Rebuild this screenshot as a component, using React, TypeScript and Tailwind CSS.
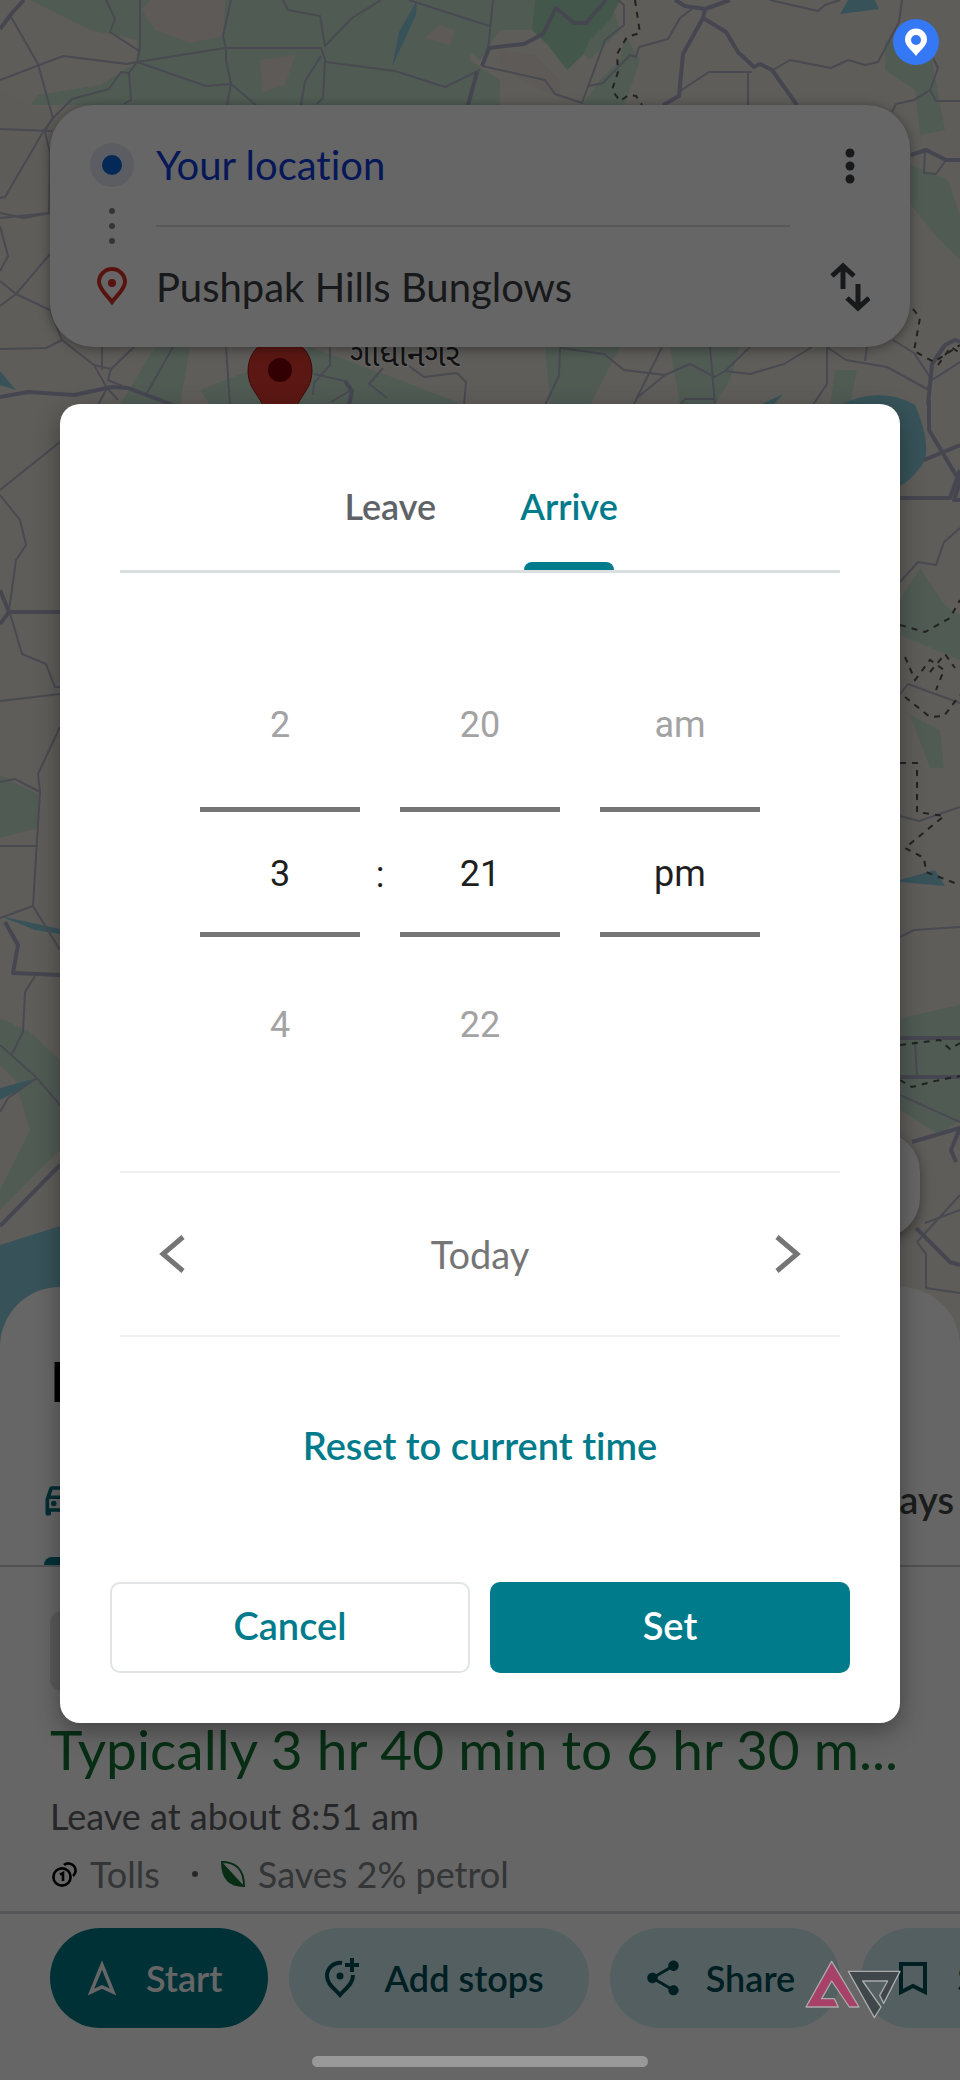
import { useState } from 'react';
import { MdOutlineDirectionsCar, MdShare } from 'react-icons/md';

const thinRoads = [
  'M11 17L38 64L52 115L53 118L45 131M0 80L63 56L127 64L137 62L140 48L140 0',
  'M137 62L225 48H321L326 62L395 71L445 87L480 70',
  'M106 0L115 19L110 32L139 51M137 62L129 73L131 100L124 104M129 73L121 72L109 89L72 99L53 118L43 132L5 197L0 198',
  'M231 0L223 36L226 48V60L231 84L206 86L137 62M231 84L227 105M231 84L256 105',
  'M283 0L288 10L320 16L325 46L352 18L381 0M409 0L480 23M321 56L305 81L301 105M325 60L323 98L317 104',
  'M45 132L50 153L49 213L0 218M0 129L52 131M0 213L24 218L50 213M0 226L8 256L0 271M50 254L16 294L0 306M0 281L16 294L50 310L62 340L46 348L0 349',
  'M62 340L94 365L111 369L134 347M102 347V370M94 365L107 388L118 400M111 369L108 380L122 386M107 388L98 405M173 347L147 393M226 347L230 405',
  'M330 347V365L314 383L313 395M383 368L369 384L387 398M409 366L424 377L457 373L466 382L464 405M353 389L331 402M314 374L345 381',
  'M480 23L490 26M493 0L488 50L482 66M482 66L545 80L555 94L582 103L605 40L624 25V5L618 0M589 86L603 83L630 55L636 57L639 47L668 39L680 18L692 9',
  'M770 0L818 11L825 5L840 0M902 0L899 22L878 62L865 65L848 60L831 68L790 60L773 70M680 91L709 72H752M748 71V105',
  'M933 58L938 68L930 90L914 100L896 104L892 112M930 90L936 101H960M925 150L924 173L936 174L946 160',
  'M560 347L559 376L545 405M560 348L604 354L624 370L665 375L690 364L715 377L725 371L750 347M662 347L634 404M665 375L638 397M710 347L715 405M725 371L750 374L784 364L812 347M827 347V384L813 405M680 405L685 399H715M867 347L865 361M827 347L846 360L887 367L927 389L932 380L914 353L893 340M932 380L960 362',
  'M0 490L60 442M0 495L20 520L26 545L16 560L9 610L22 654L46 664L55 687H60M0 701L60 694M60 727L38 774L40 792L33 906L60 950M0 782L15 779L40 792M0 846H37M0 918L33 906M35 976L25 992L23 1032L12 1054M0 1045L37 1078L60 1105M0 1112L8 1098L37 1078',
  'M900 582L918 562L936 565L944 542L960 528M900 694L908 684L960 703M900 816L919 821L960 807M900 937L914 930L960 927M915 1041L917 1078M900 1095L960 1122M917 1242L960 1195M917 1242L926 1254V1288L960 1293M925 1223L960 1210',
];

const thickRoads = [
  'M0 29L12 13L24 0M0 397L28 392L74 395L112 387L128 388L173 405',
  'M482 66L489 48L524 44L543 34L556 8L574 23H586L606 0M477 72L468 105',
  'M675 0L685 6L705 9L730 0M705 9L703 18L683 54L679 96L663 105M703 18L726 32L738 52L754 67L760 64L772 70L797 105',
  'M911 155L926 150L946 160H960M928 405L932 364L945 345L955 340L960 342M929 400V430L960 482L954 500H960M924 460L960 445',
  'M345 381L352 391L349 405',
  'M0 590L9 612H60M9 612L0 624M5 922L18 945L13 973L60 975M0 1226L60 1165',
  'M900 498H950L960 470M900 1038H960M900 1077H960M912 1142L960 1128L951 1150L956 1162M916 1228L950 1262L960 1265',
];

const dashedTrails = [
  'M635 0L640 33L627 37L617 54L618 72L612 90L620 101L629 95L636 96L642 105',
  'M913 309L920 318L914 351L934 362L960 345M938 365L951 347L960 353',
  'M900 625L925 632L950 618L960 600M905 657L915 680L930 660L944 670L936 690M930 672L945 654L955 668M905 697L930 717L944 716L960 695M900 763H917V812L944 816L905 848L924 858L926 872L960 885',
  'M900 1045L940 1040L950 1049L960 1043M900 1080L912 1087L935 1081L960 1076',
];

function MapBackground() {
  return (
    <svg className="absolute inset-0 h-full w-full" viewBox="0 0 960 2080" preserveAspectRatio="xMidYMin slice" aria-hidden="true">
      <rect width="960" height="2080" fill="#ece8df" />
      <g fill="#c8e4d2">
        <path d="M30 0H480L470 60L500 80L500 105H30L38 95L100 85L137 62V40L90 30Z" />
        <path d="M455 0H610L620 30L590 60L560 30H500L480 60L455 40Z" />
        <path d="M625 35L620 60L600 80L582 105H625L640 60Z" />
        <path d="M885 40L930 50L945 130L920 135L915 90L885 70Z" />
        <path d="M911 165L948 180L960 215V260L935 235L911 205Z" />
        <path d="M155 347H190L180 405H120ZM200 390L310 347L400 380L465 405H210Z" />
        <path d="M545 347H620L590 405H550ZM670 347H740L730 380L715 405H680ZM835 370H857L850 405H830Z" />
        <path d="M0 775L40 795L38 828L0 838ZM0 1018L30 1032L60 1060V1150L0 1210V1190L30 1130L15 1080L0 1065Z" />
        <path d="M900 600L920 568L945 605L960 615V660L900 635ZM910 715L940 730L944 768H930ZM900 1018L960 1005V1120L940 1135L900 1110Z" />
      </g>
      <path d="M535 0H620L610 20L590 40L583 55L567 70L548 45L532 30Z" fill="#a9dab8" />
      <g fill="#ebe2da">
        <path d="M150 0H225L223 36L190 43L155 30L142 10ZM260 60L295 55L285 85L262 92ZM440 25L455 30L450 45L425 38ZM500 50L535 55L560 80V100L500 68Z" />
        <path d="M0 90L60 120L40 200L0 200Z" opacity="0.4" />
      </g>
      <g fill="#8acfdf">
        <path d="M417 0L416 15L392 67L399 32ZM848 0H875L879 9L840 14ZM0 371L16 390L0 385ZM760 405L783 394L773 405Z" />
        <path d="M840 405Q880 385 915 405Q930 440 925 460Q910 485 890 490H840Z" />
        <path d="M0 916L60 929V934L35 930ZM0 1088L37 1078L15 1092L0 1100ZM0 1245L60 1226V1400H0ZM900 880L935 870L945 886L900 882Z" />
      </g>
      <g fill="none" stroke="#b4b7ca" strokeWidth="2" strokeLinejoin="round">
        {thinRoads.map((d) => <path key={d} d={d} />)}
      </g>
      <g fill="none" stroke="#acafc9" strokeWidth="4" strokeLinejoin="round">
        {thickRoads.map((d) => <path key={d} d={d} />)}
      </g>
      <g fill="none" stroke="#555" strokeWidth="2" strokeDasharray="6 6">
        {dashedTrails.map((d) => <path key={d} d={d} />)}
      </g>
      <text x="350" y="366" fontSize="32" fill="#2c2c2c" stroke="#fff" strokeWidth="2" paintOrder="stroke" fontFamily="'Noto Sans Gujarati', 'Noto Sans', sans-serif">ગાંધીનગર</text>
      <path d="M248 370a32 32 0 1 1 64 0c0 22-14 24-19 48h-26c-5-24-19-26-19-48Z" fill="#e33b30" stroke="#9c1c14" strokeWidth="1" />
      <circle cx="280" cy="370" r="12" fill="#7d0006" />
    </svg>
  );
}

function DirectionsCard() {
  return (
    <section className="relative mx-[50px] mt-[105px] flex rounded-[44px] bg-white pl-10 pr-[30px] shadow-[0_2px_12px_rgba(0,0,0,0.4)]">
      <svg className="h-[242px] w-11 shrink-0" viewBox="0 0 44 242" aria-hidden="true">
        <circle cx="22" cy="60" r="22" fill="#e3e9f8" />
        <circle cx="22" cy="60" r="10" fill="#0b66d8" />
        <g fill="#80868b">
          <circle cx="22" cy="106" r="3" />
          <circle cx="22" cy="121" r="3" />
          <circle cx="22" cy="136" r="3" />
        </g>
        <path d="M22 197C17 190 9 184 9 177a13 13 0 0 1 26 0c0 7-8 13-13 20Z" fill="none" stroke="#d93025" strokeWidth="4" />
        <circle cx="22" cy="178" r="4" fill="#d93025" />
      </svg>
      <div className="ml-[22px] flex-1 text-[40px]">
        <button className="flex h-[120px] w-full items-center text-[#0f3ddc]">Your location</button>
        <hr className="border-t-2 border-[#dadce0]" />
        <button className="flex h-[120px] w-full items-center text-[#3c4043]">Pushpak Hills Bunglows</button>
      </div>
      <div className="ml-[30px] w-[60px]">
        <button aria-label="More options" className="grid h-[121px] w-full place-items-center">
          <svg width="12" height="38" viewBox="0 0 12 38" fill="#3c4043">
            <circle cx="6" cy="6" r="4.500" />
            <circle cx="6" cy="19" r="4.500" />
            <circle cx="6" cy="32" r="4.500" />
          </svg>
        </button>
        <button aria-label="Swap start and destination" className="grid h-[121px] w-full place-items-center">
          <svg width="40" height="50" viewBox="0 0 40 50" fill="none" stroke="#3c4043" strokeWidth="5">
            <path d="M13 27V4M2 14L13 4L24 14M28 22V46M17 36L28 46L39 36" />
          </svg>
        </button>
      </div>
    </section>
  );
}

function ActionChip({ label, primary, children }: { label: string; primary?: boolean; children: React.ReactNode }) {
  return (
    <button
      className={`flex h-[100px] shrink-0 items-center gap-6 rounded-full pl-8 pr-[45px] text-[36px] font-semibold ${
        primary ? 'bg-[#007b8b] text-white' : 'bg-[#cfeef2] text-[#004f58]'
      }`}
    >
      <span className="grid w-10 place-items-center">{children}</span>
      {label}
    </button>
  );
}

function RouteSheet() {
  return (
    <section className="relative rounded-t-[60px] bg-white">
      <h1 className="px-[50px] pt-[60px] text-[56px] font-bold leading-[68px] text-black">Drive</h1>
      <nav className="mt-[42px] flex h-[110px] items-start justify-between border-b-2 border-[#c8cacc] pl-10 pr-1.5 text-[38px] font-semibold text-[#444746]">
        <button aria-label="Drive" className="flex h-[108px] flex-col justify-between text-[#00707f]">
          <MdOutlineDirectionsCar size={44} className="mt-5" />
          <span className="ml-1 block h-2 w-20 rounded-t-lg bg-[#007b8b]" />
        </button>
        <button className="flex h-[84px] items-center">days</button>
      </nav>
      <div className="mx-[50px] mt-11 h-20 w-52 rounded-xl bg-[#e0e1e3]" />
      <div className="px-[50px]">
        <p className="mt-5 whitespace-nowrap text-[55px] leading-[76px] text-[#137333]">Typically 3 hr 40 min to 6 hr 30 m...</p>
        <p className="text-[36px] leading-[58px] text-[#5f6368]">Leave at about 8:51 am</p>
        <p className="flex items-center text-[36px] leading-[58px] text-[#80868b]">
          <svg className="ml-0.5 mr-3 shrink-0" width="26" height="26" viewBox="0 0 26 26" fill="none" stroke="#000" strokeWidth="2.6" aria-hidden="true">
            <circle cx="10" cy="16" r="8.6" />
            <path d="M12 4a7 7 0 1 1 9 11M8 13.500L11 12v8" />
          </svg>
          Tolls
          <span className="ml-8 mr-[22px] size-1.5 rounded-full bg-[#5f6368]" />
          <svg className="mr-3 shrink-0" width="26" height="28" viewBox="0 0 26 28" aria-hidden="true">
            <path d="M2 2C14 2 24 8 24 26C10 26 2 18 2 2Z" fill="#fff" stroke="#137333" strokeWidth="2" />
            <path d="M2 2L24 26C10 26 2 18 2 2Z" fill="#137333" />
          </svg>
          Saves 2% petrol
        </p>
      </div>
      <div className="mt-2 flex gap-[21px] overflow-hidden border-t-[3px] border-[#d6d8db] pl-[50px] pt-3.5">
        <ActionChip label="Start" primary>
          <svg width="32" height="36" viewBox="0 0 32 36" fill="none" stroke="currentColor" strokeWidth="3.5">
            <path d="M16 5L27 32L16 27L5 32Z" />
          </svg>
        </ActionChip>
        <ActionChip label="Add stops">
          <svg width="40" height="42" viewBox="-2 0 40 42" fill="none" stroke="currentColor" strokeWidth="4">
            <path d="M19 6A13 13 0 0 0 4 19C4 27 11 31 17 38C23 31 30 27 30 18" />
            <path d="M29 1V15M22 8H36" />
            <circle cx="17" cy="19" r="3.5" fill="currentColor" stroke="none" />
          </svg>
        </ActionChip>
        <ActionChip label="Share">
          <MdShare size={42} />
        </ActionChip>
        <ActionChip label="Save">
          <svg width="30" height="36" viewBox="0 0 30 36" fill="none" stroke="currentColor" strokeWidth="4">
            <path d="M3 4H27V32L15 26L3 32Z" />
          </svg>
        </ActionChip>
      </div>
      <div className="h-[52px]" />
    </section>
  );
}

function Wheel({ label, prev, value, next, onPrev, onNext }: { label: string; prev: string; value: string; next: string; onPrev: () => void; onNext: () => void }) {
  return (
    <div className="flex w-40 flex-col text-[36px]">
      <button onClick={onPrev} className="mb-8 h-[100px] text-[#a3a3a3]">{prev}</button>
      <input aria-label={label} value={value} readOnly className="h-[130px] w-full border-y-[5px] border-[#757575] pt-1 text-center text-[#1f1f1f] outline-none" />
      <button onClick={onNext} className="mt-[38px] h-[100px] text-[#a3a3a3]">{next}</button>
    </div>
  );
}

function TimeDialog() {
  const [tab, setTab] = useState('Arrive');
  const [hour, setHour] = useState(3);
  const [minute, setMinute] = useState(21);
  const [pm, setPm] = useState(true);

  const wrapHour = (h: number) => ((h + 11) % 12) + 1;
  const wrapMinute = (m: number) => (m + 60) % 60;

  const reset = () => {
    setHour(3);
    setMinute(21);
    setPm(true);
  };

  return (
    <div role="dialog" aria-label="Set time" className="mx-[60px] w-full max-w-[840px] rounded-[20px] bg-white px-[50px] pb-[50px] shadow-[0_8px_24px_rgba(0,0,0,0.35)]">
      <div className="mx-2.5">
        <div role="tablist" className="flex justify-center gap-[82px] border-b-[3px] border-[#dadfe0] pt-14 text-[36px] font-semibold">
          {['Leave', 'Arrive'].map((name) => (
            <button
              key={name}
              role="tab"
              aria-selected={tab === name}
              onClick={() => setTab(name)}
              className={`min-w-24 ${tab === name ? 'text-[#007b8b]' : 'text-[#5f6368]'}`}
            >
              <span className="block h-[102px] leading-[92px]">{name}</span>
              <span className={`mx-auto block h-2 w-[90px] rounded-t-lg ${tab === name ? 'bg-[#007b8b]' : ''}`} />
            </button>
          ))}
        </div>

        <div className="flex justify-center pt-[102px] pb-[96px] font-['Roboto',sans-serif]">
          <Wheel
            label="Hour"
            prev={String(wrapHour(hour - 1))}
            value={String(hour)}
            next={String(wrapHour(hour + 1))}
            onPrev={() => setHour(wrapHour(hour - 1))}
            onNext={() => setHour(wrapHour(hour + 1))}
          />
          <span className="flex w-10 items-center justify-center text-[36px] text-[#1f1f1f]">:</span>
          <Wheel
            label="Minute"
            prev={String(wrapMinute(minute - 1)).padStart(2, '0')}
            value={String(minute).padStart(2, '0')}
            next={String(wrapMinute(minute + 1)).padStart(2, '0')}
            onPrev={() => setMinute(wrapMinute(minute - 1))}
            onNext={() => setMinute(wrapMinute(minute + 1))}
          />
          <span className="w-10" />
          <Wheel
            label="am or pm"
            prev={pm ? 'am' : ''}
            value={pm ? 'pm' : 'am'}
            next={pm ? '' : 'pm'}
            onPrev={() => setPm(false)}
            onNext={() => setPm(true)}
          />
        </div>

        <div className="flex h-[166px] items-center justify-between border-y-2 border-[#eff0f1] px-8 text-[38px] text-[#757575]">
          <button aria-label="Previous day" className="grid size-10 place-items-center">
            <svg width="26" height="38" viewBox="0 0 26 38" fill="none" stroke="currentColor" strokeWidth="5">
              <path d="M24 2L4 19L24 36" />
            </svg>
          </button>
          <span>Today</span>
          <button aria-label="Next day" className="grid size-10 place-items-center">
            <svg width="26" height="38" viewBox="0 0 26 38" fill="none" stroke="currentColor" strokeWidth="5">
              <path d="M2 2L22 19L2 36" />
            </svg>
          </button>
        </div>
      </div>

      <div className="grid h-[245px] place-items-center pb-7 text-[38px] font-semibold text-[#007b8b]">
        <button onClick={reset} className="h-[90px] px-6">Reset to current time</button>
      </div>

      <div className="grid grid-cols-2 gap-5 text-[38px] font-semibold">
        <button className="h-[91px] rounded-[10px] border-2 border-[#e1e3e4] pb-1 text-[#007b8b]">Cancel</button>
        <button className="h-[91px] rounded-[10px] bg-[#007b8b] pb-1 text-white">Set</button>
      </div>
    </div>
  );
}

function Watermark() {
  return (
    <svg className="absolute bottom-[58px] right-[57px]" width="98" height="62" viewBox="72 184 294 186" aria-hidden="true">
      <g stroke="#aaa" strokeWidth="4" strokeLinejoin="round">
        <path d="M152 188L75 325H172L160 300H122L152 247L205 325H234Z" fill="#a84168" />
        <path d="M202 218H357L308 314L296 290L320 247H245L300 325L280 357Z" fill="#40474b" />
      </g>
    </svg>
  );
}

export default function App() {
  return (
    <main className="relative grid min-h-screen overflow-hidden font-['Lato',sans-serif] [font-variant-ligatures:none]">
      <div className="relative flex min-w-0 flex-col [grid-area:1/1]">
        <MapBackground />
        <DirectionsCard />
        <button aria-label="Map layers" className="relative mb-[49px] mr-10 mt-auto size-[106px] self-end rounded-[40px] bg-white shadow-[0_4px_12px_rgba(0,0,0,0.4)]" />
        <RouteSheet />
      </div>

      <div className="relative grid place-items-center bg-black/60 pt-[47px] [grid-area:1/1]">
        <TimeDialog />
      </div>

      <svg className="absolute right-[21px] top-[19px]" width="46" height="46" viewBox="0 0 46 46" aria-hidden="true">
        <circle cx="23" cy="23" r="23" fill="#3478f6" />
        <path d="M23 37C18 30 12 27 12 20.500a11 11 0 0 1 22 0C34 27 28 30 23 37Z" fill="#fff" />
        <circle cx="23" cy="21" r="5" fill="#3478f6" />
      </svg>
      <Watermark />
      <div className="absolute bottom-[13px] left-1/2 h-[11px] w-[336px] -translate-x-1/2 rounded-full bg-[#999]" />
    </main>
  );
}
